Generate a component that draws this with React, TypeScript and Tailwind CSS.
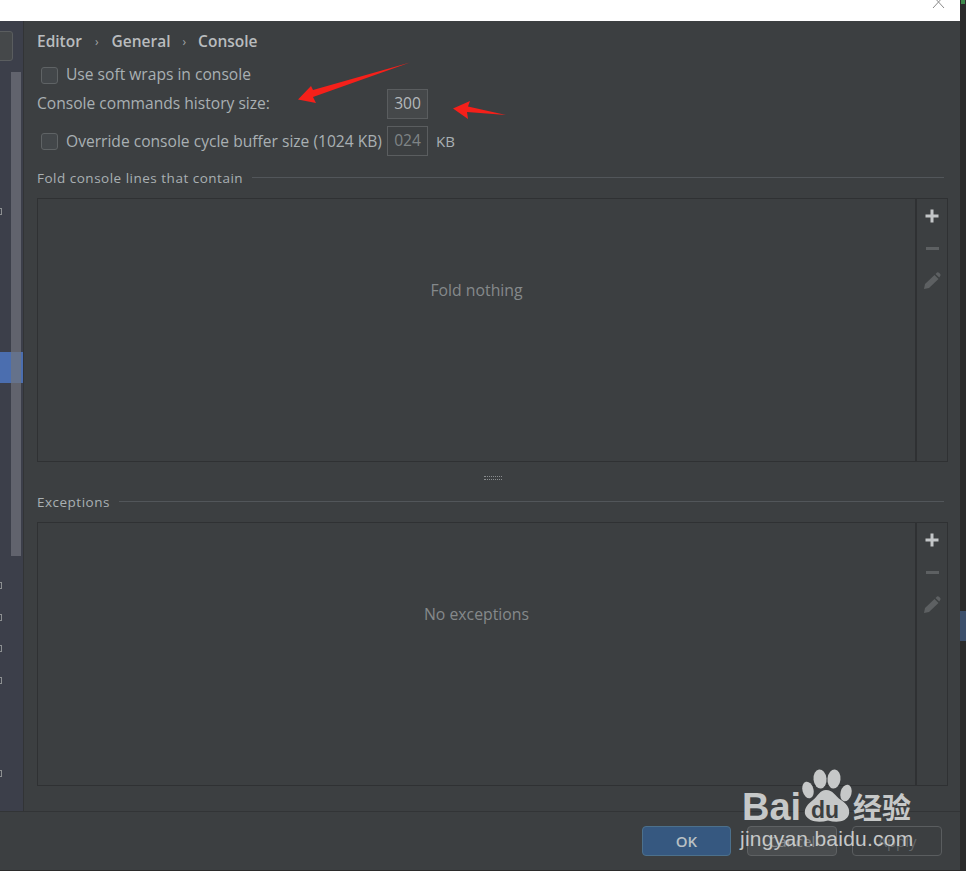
const font = { sans: "font-['Open_Sans','Noto_Sans',sans-serif]" };

const SideMark = ({ className }: { className: string }) => (
  <div className={`absolute left-0 w-[2px] h-[7px] border border-l-0 border-[#8c8f91] ${className}`} />
);

const Checkbox = () => (
  <div className="w-[17px] h-[17px] rounded-[3px] border border-[#5f6365] bg-[#43474a] shrink-0" />
);

const SectionTitle = ({ title }: { title: string }) => (
  <div className="flex items-center gap-[9px] h-[16px] mr-[4px]">
    <span className="pt-[4px] text-[13.5px] tracking-[0.5px] text-[#a9b0b3] leading-none">{title}</span>
    <div className="flex-1 h-px bg-[#52565a]" />
  </div>
);

const PencilIcon = () => (
  <svg width="18" height="18" viewBox="0 0 18 18" fill="#5d6062">
    <path d="M1 17 L2 12 L11.5 3 L15.500 7 L6 16 Z" />
    <path d="M12.500 2 L14 0.600 Q15 0 16 0.800 L17.200 2 Q18 3 17.200 4 L16.200 5.600 Z" />
  </svg>
);

const ListPanel = ({ empty }: { empty: string }) => (
  <div className="flex h-[264px] border border-[#2f3133]">
    <div className="flex-1 flex justify-center pt-[80px] text-[15.8px] leading-[22px] text-[#85898b]">{empty}</div>
    <div className="w-[32px] border-l-2 border-[#2f3133] flex flex-col items-center pt-[10px]">
      <svg width="14" height="14" viewBox="0 0 14 14" fill="#c3c6c8">
        <path d="M5.500 0.500h3v5H13.500v3H8.500V13.500h-3V8.500H0.500v-3h5z" />
      </svg>
      <div className="w-[13px] h-[3px] bg-[#5d6062] mt-[24px]" />
      <div className="mt-[22px]">
        <PencilIcon />
      </div>
    </div>
  </div>
);

const Watermark = () => (
  <div className="absolute left-[740px] top-[768px] w-[210px] h-[100px] text-[#c6c8c8] pointer-events-none">
    <svg className="absolute left-[62px] top-0" width="52" height="56" viewBox="0 0 52 56" fill="#c6c8c8">
      <ellipse cx="6" cy="22" rx="5.500" ry="8.500" transform="rotate(-14 6 22)" />
      <ellipse cx="18" cy="11" rx="6.500" ry="9.500" transform="rotate(-6 18 11)" />
      <ellipse cx="32" cy="11" rx="6.500" ry="9.500" transform="rotate(6 32 11)" />
      <ellipse cx="44" cy="25" rx="5.500" ry="8.500" transform="rotate(14 44 25)" />
      <path d="M24 22 C31 22 33 28 39 32 C46 37 48 41 47 46 C45 54 35 55 26 52.500 C17 55 6 54 3 46 C2 40 6 36 11 32 C16 28 18 22 24 22 Z" />
    </svg>
    <span className="absolute left-[71px] top-[31px] text-[23px] font-bold leading-none text-[#3c3f41] font-['Liberation_Sans',sans-serif]">du</span>
    <span className="absolute left-[2px] top-[20px] text-[38px] font-bold leading-none font-['Liberation_Sans',sans-serif]">Bai</span>
    <span className="absolute left-[113px] top-[24px] text-[29px] font-bold leading-none font-['Noto_Sans_CJK_SC',sans-serif]">经验</span>
    <span className="absolute left-0 top-[60px] text-[21px] leading-none tracking-[0.25px] whitespace-nowrap font-['Liberation_Sans',sans-serif]">
      jingyan.baidu.com
    </span>
  </div>
);

const Arrows = () => (
  <svg className="absolute left-0 top-0 pointer-events-none" width="966" height="140" viewBox="0 0 966 140" fill="#f5201a">
    <path d="M410 62.500 L313 90 L311 86 L298 99.500 L316 103 L313 97 Z" />
    <path d="M506 115 L468 106.500 L470 101 L453 108.500 L468 119 L467 112 Z" />
  </svg>
);

export default function App() {
  return (
    <div className={`relative w-[966px] h-[871px] overflow-hidden flex bg-[#2b2b2b] ${font.sans}`}>
      <div className="w-[960px] flex flex-col">
        <div className="h-[21px] bg-white relative shrink-0">
          <svg className="absolute left-[932px] top-0" width="14" height="9" viewBox="0 0 14 9" stroke="#8a8a8a" fill="none">
            <path d="M1 -4 L12 8 M12 -4 L1 8" />
          </svg>
        </div>

        <div className="flex h-[790px] shrink-0">
          <div className="relative w-[24px] shrink-0 bg-[#3c3f4a] border-r border-[#323436]">
            <div className="absolute left-[-4px] top-[10px] w-[17px] h-[30px] rounded-[3px] border border-[#5a5d5f] bg-[#45484a]" />
            <div className="absolute left-0 top-[331px] w-[23px] h-[31px] bg-[#4b6eaf]" />
            <div className="absolute left-[11px] top-[51px] w-[10px] h-[484px] bg-[#71747c]/70" />
            <SideMark className="top-[187px]" />
            <SideMark className="top-[561px]" />
            <SideMark className="top-[593px]" />
            <SideMark className="top-[624px]" />
            <SideMark className="top-[656px]" />
            <SideMark className="top-[749px]" />
          </div>

          <div className="flex-1 bg-[#3c3f41] pl-[13px] pr-[12px] pt-[11px] flex flex-col">
            <div className="flex items-center h-[20px] text-[15.5px] font-semibold text-[#b9bcbe] leading-none">
              <span>Editor</span>
              <span className="ml-[13px] mr-[13px] text-[12px] font-normal text-[#a0a4a6]">›</span>
              <span>General</span>
              <span className="ml-[12px] mr-[12px] text-[12px] font-normal text-[#a0a4a6]">›</span>
              <span>Console</span>
            </div>

            <div className="flex items-center gap-[8px] pl-[4px] mt-[13px] h-[20px] text-[15.6px] text-[#a9b0b3]">
              <Checkbox />
              <span>Use soft wraps in console</span>
            </div>

            <div className="flex items-start justify-between w-[391px] mt-[4px] h-[30px] text-[15.6px] text-[#a9b0b3]">
              <span className="leading-[29px]">Console commands history size:</span>
              <div className="w-[41px] h-[30px] flex items-center justify-center border border-[#5a5d5f] bg-[#45484a] text-[#b4b8ba]">300</div>
            </div>

            <div className="flex items-center mt-[7px] h-[30px] text-[15.6px] text-[#a9b0b3]">
              <div className="pl-[4px]">
                <Checkbox />
              </div>
              <span className="ml-[8px] w-[321px] pt-[2px] whitespace-nowrap">Override console cycle buffer size (1024 KB)</span>
              <div className="w-[41px] h-[30px] flex items-center justify-center border border-[#5a5d5f] text-[#7f8486]">024</div>
              <span className="ml-[8px] text-[15px]">KB</span>
            </div>

            <div className="mt-[13px]">
              <SectionTitle title="Fold console lines that contain" />
            </div>
            <div className="mt-[13px]">
              <ListPanel empty="Fold nothing" />
            </div>

            <div className="h-[31px] flex items-center justify-center shrink-0">
              <div className="w-[18px] h-[4px] border-y border-dotted border-[#8a8d8f]" />
            </div>

            <SectionTitle title="Exceptions" />
            <div className="mt-[13px]">
              <ListPanel empty="No exceptions" />
            </div>
          </div>
        </div>

        <div className="h-[60px] shrink-0 bg-[#3c3f41] border-t border-[#323436] border-b border-b-[#2b2b2b] flex items-start justify-end pt-[14px] pr-[18px] text-[15px] font-semibold">
          <div className="w-[89px] h-[30px] rounded-[4px] bg-[#365880] border border-[#4c708c] flex items-center justify-center text-[#b9c0c4]">OK</div>
          <div className="ml-[16px] w-[90px] h-[30px] rounded-[4px] bg-[#4a4d4f] border border-[#5e6163] flex items-center justify-center font-normal text-[#85898b]">Cancel</div>
          <div className="ml-[15px] w-[90px] h-[30px] rounded-[4px] border border-[#5a5d5f] flex items-center justify-center font-normal text-[#63676a]">Apply</div>
        </div>
      </div>

      <div className="relative flex-1">
        <div className="absolute left-0 top-[611px] w-full h-[30px] bg-[#3c4f6b]" />
        <div className="absolute left-[1px] top-0 w-[4px] h-[4px] bg-[#3f8a4d]" />
      </div>

      <Arrows />
      <Watermark />
    </div>
  );
}
